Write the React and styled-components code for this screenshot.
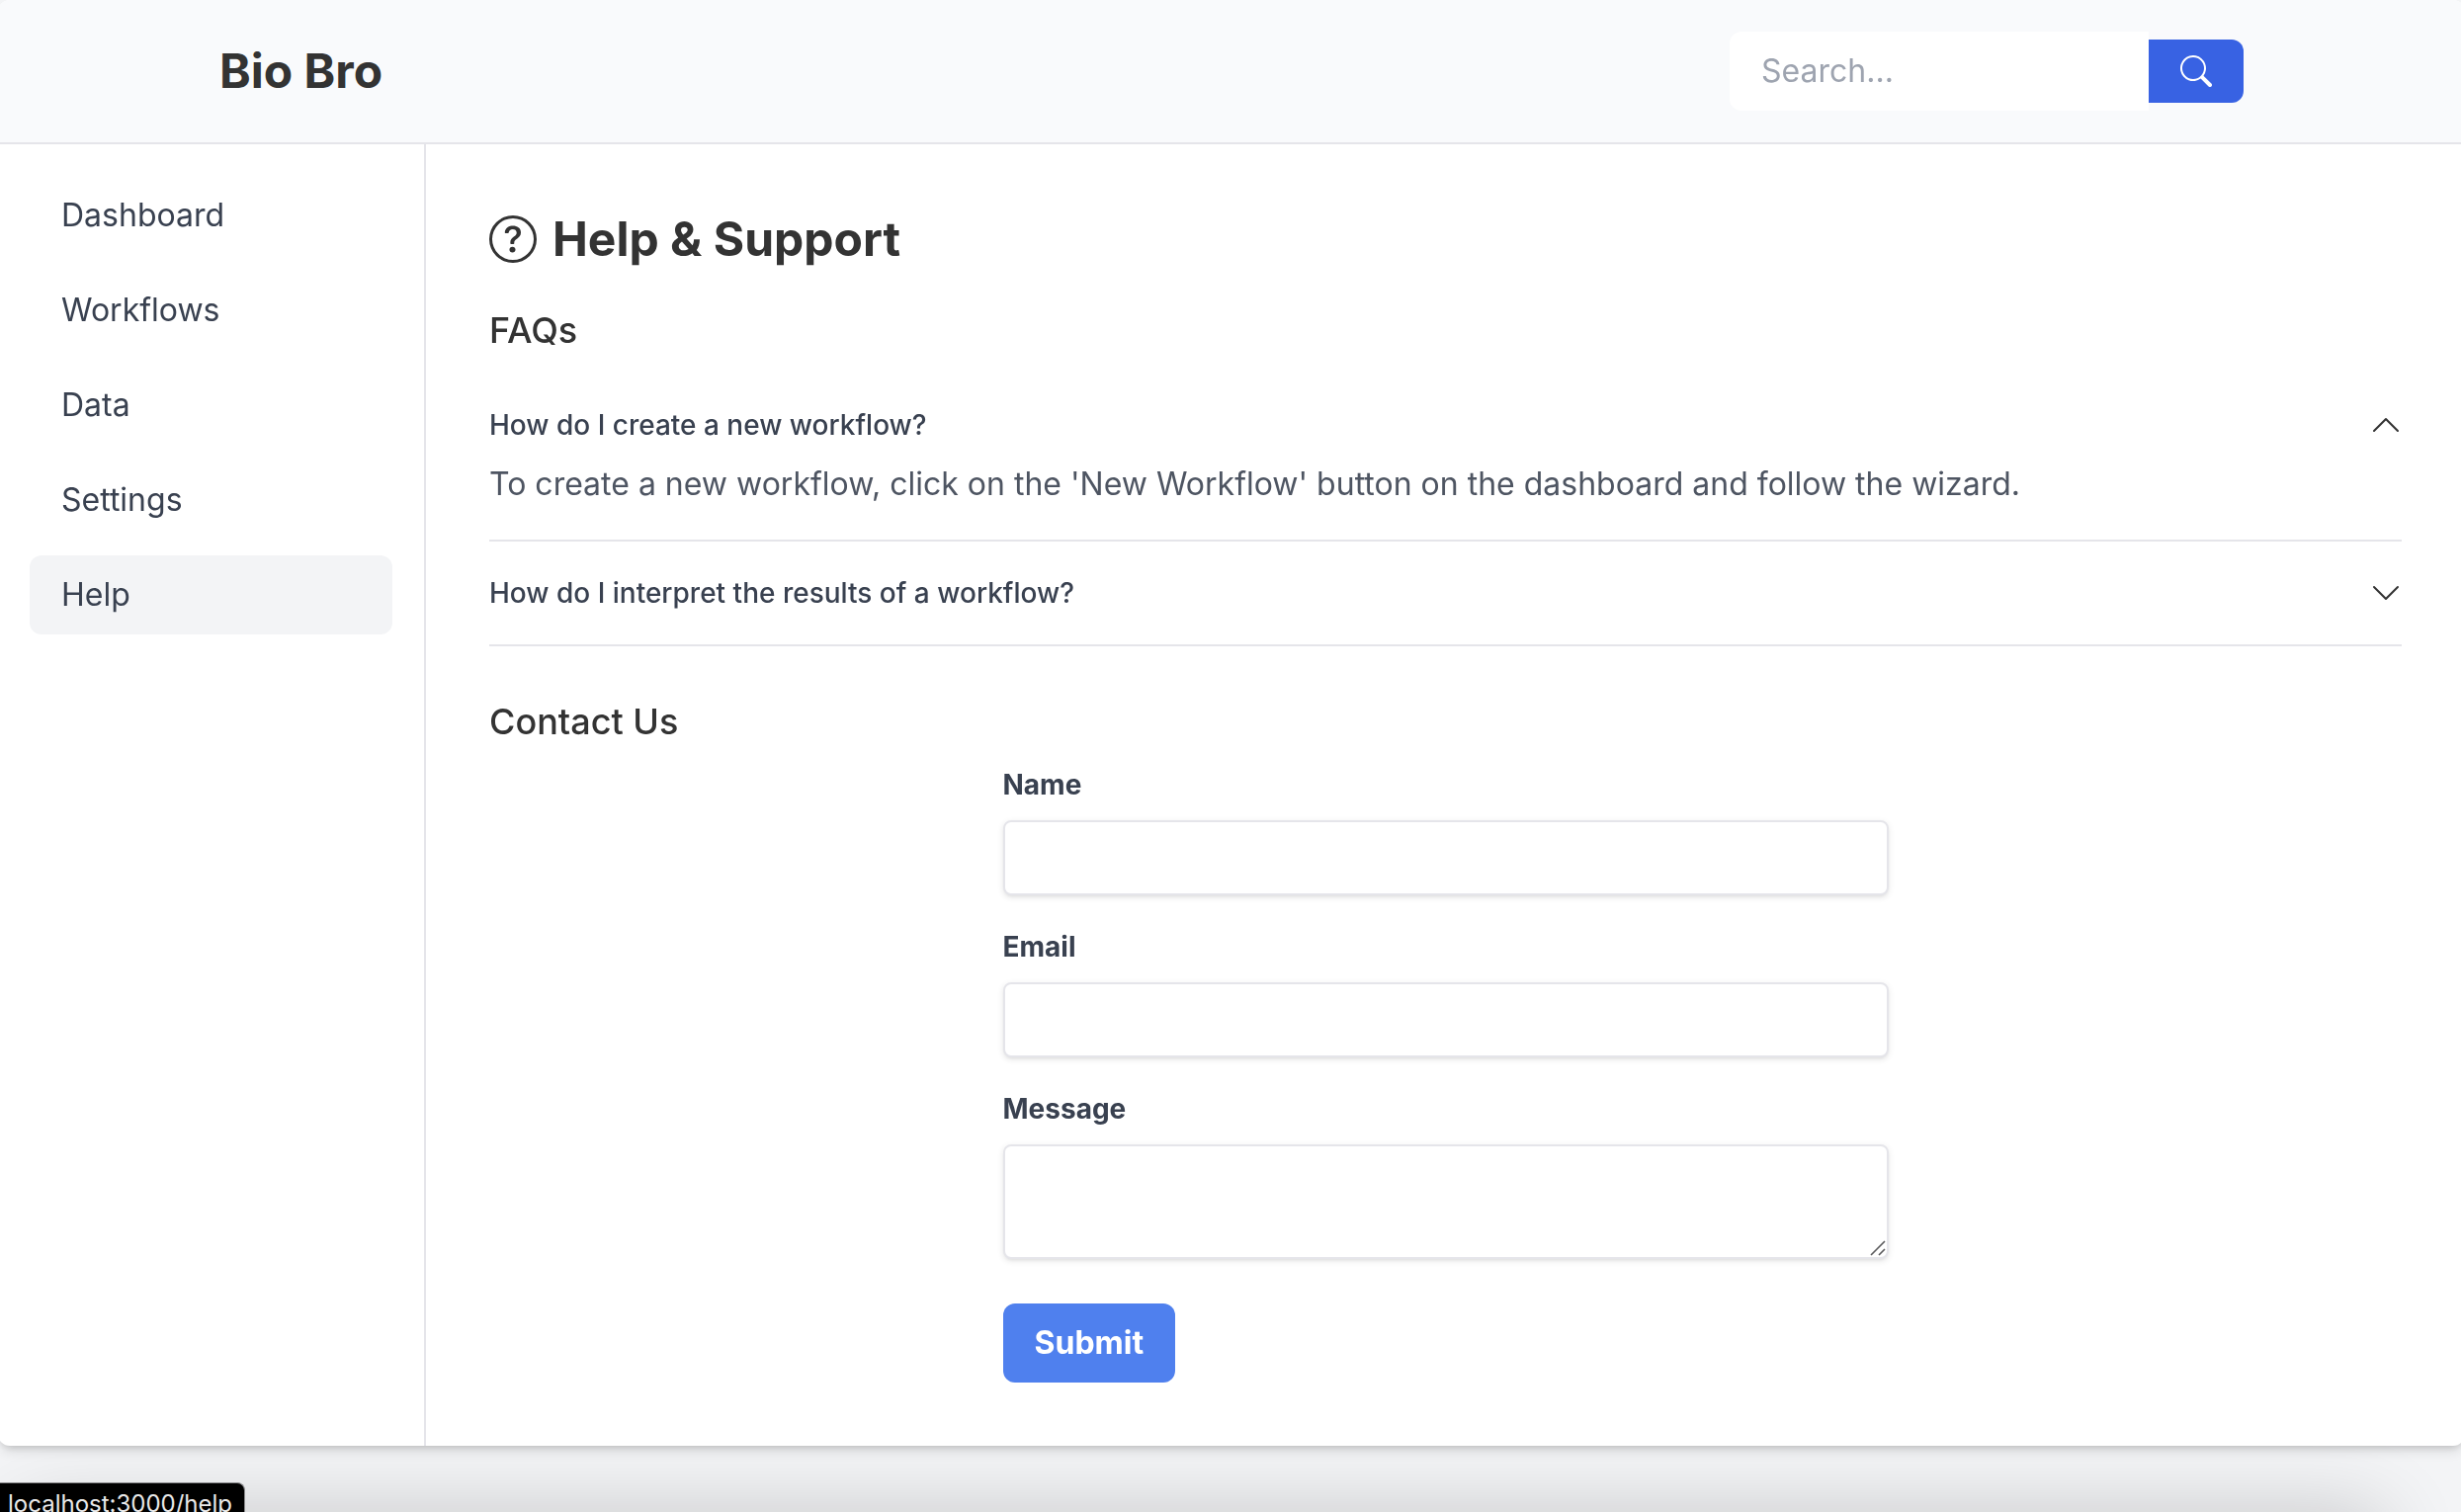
import React, { useState } from "react";
import styled, { createGlobalStyle } from "styled-components";
import { BsSearch, BsQuestionCircle, BsChevronUp, BsChevronDown } from "react-icons/bs";

const GlobalStyle = createGlobalStyle`
  *, *::before, *::after { box-sizing: border-box; }
  body {
    margin: 0;
    min-height: 100vh;
    overflow: hidden;
    background: #f3f4f6;
    color: #333333;
    font: 400 32px/48px Inter, "Liberation Sans", sans-serif;
  }
  h1, h2, p { margin: 0; }
  button, input, textarea { font: inherit; color: inherit; }
`;

const Card = styled.div`
  position: relative;
  z-index: 1;
  margin: 0 -4px 0 -2px;
  border-radius: 12px;
  background: #ffffff;
  box-shadow: 0 8px 12px -2px rgba(0, 0, 0, 0.1), 0 4px 8px -4px rgba(0, 0, 0, 0.2);
  overflow: hidden;
`;

const Header = styled.header`
  padding: 32px 0;
  background: #f9fafc;
  border-bottom: 2px solid #e5e5ea;
`;

const HeaderInner = styled.div`
  display: flex;
  align-items: center;
  justify-content: space-between;
  max-width: 2048px;
  margin: 0 auto;
`;

const Brand = styled.div`
  font-size: 48px;
  line-height: 64px;
  font-weight: 700;
`;

const SearchForm = styled.form`
  display: flex;
  align-items: center;
`;

const SearchInput = styled.input`
  width: 424px;
  padding: 16px 32px;
  border: 0;
  border-radius: 12px 0 0 12px;
  background: #ffffff;
  outline: none;
  &::placeholder { color: #9ea4b0; opacity: 1; }
`;

const SearchButton = styled.button`
  display: flex;
  padding: 16px 32px;
  border: 0;
  border-radius: 0 12px 12px 0;
  background: #3862e3;
  color: #ffffff;
`;

const Body = styled.div`
  display: flex;
`;

const Sidebar = styled.nav`
  display: flex;
  flex-direction: column;
  gap: 16px;
  flex: 0 0 433px;
  padding: 32px;
  border-right: 2px solid #e5e5ea;
`;

const NavLink = styled.a`
  padding: 16px 32px;
  border-radius: 12px;
  background: ${(p) => (p.$active ? "#f3f4f6" : "transparent")};
  color: #394150;
  text-decoration: none;
`;

const Main = styled.main`
  flex: 1;
  min-width: 0;
  padding: 64px;
`;

const Title = styled.h1`
  display: flex;
  align-items: center;
  gap: 16px;
  margin-bottom: 32px;
  font-size: 48px;
  line-height: 64px;
  font-weight: 700;
`;

const SectionTitle = styled.h2`
  margin-bottom: 16px;
  font-size: 36px;
  line-height: 56px;
  font-weight: 500;
`;

const FaqList = styled.section`
  margin-bottom: 48px;
`;

const FaqItem = styled.div`
  padding: 32px 0;
  border-bottom: 2px solid #e5e5ea;
`;

const Question = styled.button`
  display: flex;
  align-items: center;
  justify-content: space-between;
  width: 100%;
  padding: 0;
  border: 0;
  background: none;
  color: #394150;
  font-size: 28px;
  line-height: 40px;
  font-weight: 500;
  text-align: left;
  svg { color: #333333; }
`;

const Answer = styled.p`
  margin-top: 16px;
  color: #4e5562;
`;

const ContactForm = styled.form`
  display: flex;
  flex-direction: column;
  gap: 32px;
  max-width: 896px;
  margin: 0 auto;
`;

const Field = styled.div`
  display: flex;
  flex-direction: column;
  gap: 16px;
`;

const Label = styled.label`
  color: #394150;
  font-size: 28px;
  line-height: 40px;
  font-weight: 700;
`;

const TextInput = styled.input`
  width: 100%;
  height: 76px;
  padding: 16px 24px;
  border: 2px solid #e5e5ea;
  border-radius: 8px;
  background: #ffffff;
  box-shadow: 0 2px 6px rgba(0, 0, 0, 0.1), 0 2px 4px -2px rgba(0, 0, 0, 0.1);
  outline: none;
`;

const TextArea = styled(TextInput)`
  display: block;
  height: 116px;
  resize: none;
`;

const AreaWrap = styled.div`
  position: relative;
`;

const Grip = styled.svg`
  position: absolute;
  right: 3px;
  bottom: 3px;
`;

const Submit = styled.button`
  align-self: flex-start;
  margin-top: 13px;
  padding: 16px 32px;
  border: 0;
  border-radius: 12px;
  background: #4f80ee;
  color: #ffffff;
  font-weight: 700;
`;

const WindowShade = styled.div`
  position: fixed;
  top: 100%;
  left: 20px;
  right: 80px;
  height: 200px;
  box-shadow: 0 0 80px rgba(0, 0, 0, 0.19);
`;

const StatusBubble = styled.div`
  position: fixed;
  left: 0;
  bottom: -12px;
  z-index: 2;
  padding: 5px 12px 4px 8px;
  border: 1px solid #8a8a8c;
  border-width: 1px 1px 0 0;
  border-radius: 0 8px 0 0;
  background: #000000;
  color: #e8e8e8;
  font-size: 24px;
  line-height: 32px;
`;

const links = ["Dashboard", "Workflows", "Data", "Settings", "Help"];

const faqs = [
  {
    question: "How do I create a new workflow?",
    answer:
      "To create a new workflow, click on the 'New Workflow' button on the dashboard and follow the wizard.",
  },
  {
    question: "How do I interpret the results of a workflow?",
    answer: "Open the workflow and select its results to see a summary of each step.",
  },
];

export default function App() {
  const [open, setOpen] = useState(0);
  return (
    <>
      <GlobalStyle />
      <Card>
        <Header>
          <HeaderInner>
            <Brand>Bio Bro</Brand>
            <SearchForm onSubmit={(e) => e.preventDefault()}>
              <SearchInput type="text" placeholder="Search..." aria-label="Search" />
              <SearchButton type="submit" aria-label="Submit search">
                <BsSearch size={32} />
              </SearchButton>
            </SearchForm>
          </HeaderInner>
        </Header>
        <Body>
          <Sidebar>
            {links.map((name) => (
              <NavLink key={name} href={"#" + name.toLowerCase()} $active={name === "Help"}>
                {name}
              </NavLink>
            ))}
          </Sidebar>
          <Main>
            <Title>
              <BsQuestionCircle size={48} />
              Help &amp; Support
            </Title>
            <FaqList>
              <SectionTitle>FAQs</SectionTitle>
              {faqs.map((faq, i) => (
                <FaqItem key={faq.question}>
                  <Question
                    type="button"
                    aria-expanded={open === i}
                    onClick={() => setOpen(open === i ? -1 : i)}
                  >
                    {faq.question}
                    {open === i ? <BsChevronUp size={32} /> : <BsChevronDown size={32} />}
                  </Question>
                  {open === i && <Answer>{faq.answer}</Answer>}
                </FaqItem>
              ))}
            </FaqList>
            <section>
              <SectionTitle>Contact Us</SectionTitle>
              <ContactForm onSubmit={(e) => e.preventDefault()}>
                <Field>
                  <Label htmlFor="name">Name</Label>
                  <TextInput id="name" type="text" />
                </Field>
                <Field>
                  <Label htmlFor="email">Email</Label>
                  <TextInput id="email" type="email" />
                </Field>
                <Field>
                  <Label htmlFor="message">Message</Label>
                  <AreaWrap>
                    <TextArea as="textarea" id="message" />
                    <Grip width="16" height="16" viewBox="0 0 16 16" stroke="#5a5a5c" strokeWidth="1.6" aria-hidden="true">
                      <path d="M1 15L15 1M9 15L15 9" />
                    </Grip>
                  </AreaWrap>
                </Field>
                <Submit type="submit">Submit</Submit>
              </ContactForm>
            </section>
          </Main>
        </Body>
      </Card>
      <WindowShade />
      <StatusBubble>localhost:3000/help</StatusBubble>
    </>
  );
}
